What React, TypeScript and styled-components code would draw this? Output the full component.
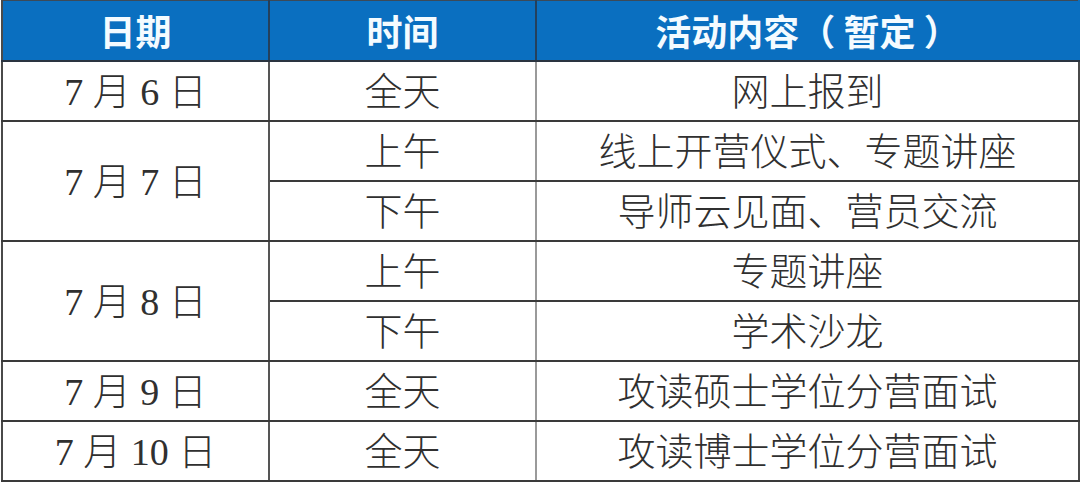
import React from "react";
import styled, { createGlobalStyle } from "styled-components";

const Global = createGlobalStyle`
  html, body { margin: 0; padding: 0; background: #ffffff; }
  body { width: 1080px; height: 484px; overflow: hidden; }
`;

const Wrap = styled.div`
  padding: 0 2px 0 1px;
  width: 1080px;
  box-sizing: border-box;
`;

const Table = styled.table`
  width: 1077px;
  border-collapse: collapse;
  table-layout: fixed;
  border-top: 1px solid #3c4a58;
  border-left: 2px solid #4a4a4a;
  border-right: 2px solid #4a4a4a;
  border-bottom: 2px solid #3a3a3a;
`;

const Col = styled.col<{ $w: number }>`
  width: ${(p) => p.$w}px;
`;

const HeadRow = styled.tr`
  height: 60px;
  background: #0a6fc0;
`;

const Row = styled.tr`
  height: 60px;
`;

const HeadCell = styled.th<{ $line?: string }>`
  padding: 0;
  color: #f4fbff;
  font-family: "Noto Sans CJK SC", "Noto Sans", sans-serif;
  font-weight: 700;
  font-size: 36px;
  line-height: 1;
  text-align: center;
  vertical-align: middle;
  border-bottom: 2px solid #2a3440;
  border-right: 2px solid ${(p) => p.$line ?? "#24405c"};
  white-space: pre;
`;

const Cell = styled.td<{ $line?: string }>`
  padding: 3px 0 0;
  color: #303030;
  font-family: "Liberation Serif", "Noto Sans CJK SC", serif;
  font-weight: 300;
  font-size: 38px;
  line-height: 1;
  text-align: center;
  vertical-align: middle;
  border-bottom: 2px solid #3a3a3a;
  border-right: ${(p) => (p.$line ? `2px solid ${p.$line}` : "none")};
  white-space: pre;
`;

type Sub = { time: string; act: string };
type Group = { date: string; items: Sub[] };

const data: Group[] = [
  { date: "7 月 6 日", items: [{ time: "全天", act: "网上报到" }] },
  {
    date: "7 月 7 日",
    items: [
      { time: "上午", act: "线上开营仪式、专题讲座" },
      { time: "下午", act: "导师云见面、营员交流" },
    ],
  },
  {
    date: "7 月 8 日",
    items: [
      { time: "上午", act: "专题讲座" },
      { time: "下午", act: "学术沙龙" },
    ],
  },
  { date: "7 月 9 日", items: [{ time: "全天", act: "攻读硕士学位分营面试" }] },
  { date: "7 月 10 日", items: [{ time: "全天", act: "攻读博士学位分营面试" }] },
];

export default function App() {
  return (
    <>
      <Global />
      <Wrap>
        <Table>
          <colgroup>
            <Col $w={267} />
            <Col $w={267} />
            <Col $w={543} />
          </colgroup>
          <thead>
            <HeadRow>
              <HeadCell>日期</HeadCell>
              <HeadCell>时间</HeadCell>
              <HeadCell $line="#0a6fc0">活动内容（ 暂定 ）</HeadCell>
            </HeadRow>
          </thead>
          <tbody>
            {data.map((g) =>
              g.items.map((it, i) => (
                <Row key={g.date + i}>
                  {i === 0 && (
                    <Cell rowSpan={g.items.length} $line="#555555">
                      {g.date}
                    </Cell>
                  )}
                  <Cell $line="#9a9a9a">{it.time}</Cell>
                  <Cell>{it.act}</Cell>
                </Row>
              ))
            )}
          </tbody>
        </Table>
      </Wrap>
    </>
  );
}
